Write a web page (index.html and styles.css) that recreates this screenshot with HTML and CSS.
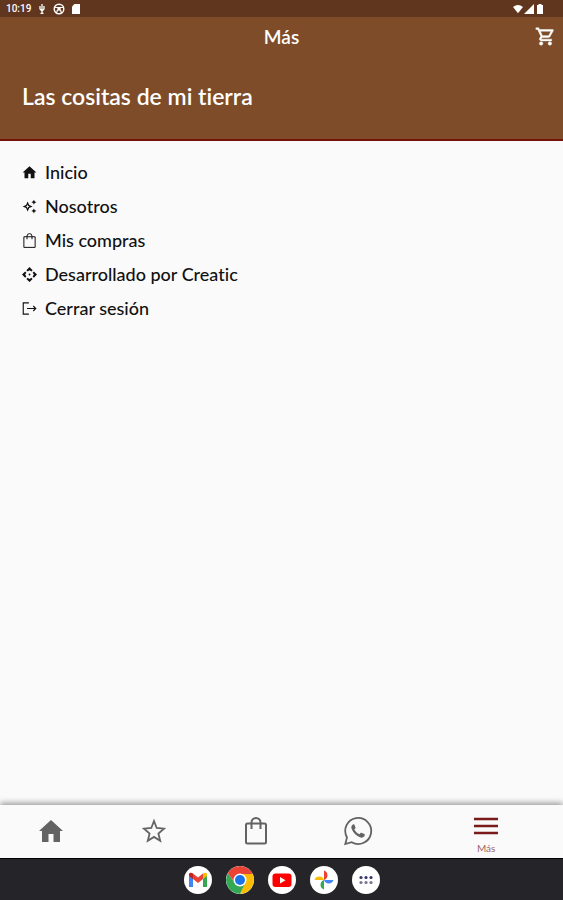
FILE: index.html
```html
<!DOCTYPE html>
<html lang="es">
<head>
    <meta charset="UTF-8">
    <meta name="viewport" content="width=device-width, initial-scale=1.0">
    <title>Más - Las cositas de mi tierra</title>
    <link rel="stylesheet" href="styles.css">
</head>
<body>
    <div class="status-bar">
        <div class="status-group">
            <span class="clock">10:19</span>
            <svg class="status-icon" viewBox="0 0 10 10"><path d="M5 0v6M3 2v3l2 2 2-2V2M5 7v2.500M3.500 9.300h3" fill="none" stroke="currentColor" stroke-width="1.300"/></svg>
            <svg class="status-icon status-ring" viewBox="0 0 12 12"><circle cx="6" cy="6" r="4.800" fill="none" stroke="currentColor" stroke-width="1.400"/><circle cx="6" cy="6" r="1.800" fill="currentColor"/><path d="M2 4.500h8M4.500 7L3.500 10M7.500 7L8.500 10" stroke="currentColor" stroke-width="1.200"/></svg>
            <svg class="status-icon" viewBox="0 0 10 10"><path d="M3.500 0H9v10H1V2.500z" fill="currentColor"/></svg>
        </div>
        <div class="status-group status-right">
            <svg class="status-icon" viewBox="0 0 12 10"><path d="M0 2.500Q6-2 12 2.500L6 10z" fill="currentColor"/></svg>
            <svg class="status-icon" viewBox="0 0 10 10"><path d="M10 0v10H0z" fill="currentColor"/></svg>
            <svg class="status-icon" viewBox="0 0 10 10"><path d="M3.500 0h3v1H8v9H2V1h1.500z" fill="currentColor"/></svg>
        </div>
    </div>

    <header class="header">
        <div class="app-bar">
            <h1>Más</h1>
            <button class="cart-btn" type="button" aria-label="Carrito">
                <svg viewBox="0 0 24 24"><path stroke="currentColor" stroke-width=".5" d="M15.550 13c.75 0 1.410-.41 1.750-1.030l3.580-6.490A.996.996 0 0 0 20.010 4H5.210l-.94-2H1v2h2l3.600 7.590-1.350 2.440C4.520 15.370 5.480 17 7 17h12v-2H7l1.100-2h7.450zM6.160 6h12.150l-2.760 5H8.530L6.160 6zM7 18c-1.100 0-1.990.9-1.990 2S5.900 22 7 22s2-.9 2-2-.9-2-2-2zm10 0c-1.100 0-1.990.9-1.990 2s.89 2 1.990 2 2-.9 2-2-.9-2-2-2z"/></svg>
            </button>
        </div>
        <h2>Las cositas de mi tierra</h2>
    </header>

    <main class="menu">
        <a class="menu-item" href="#inicio">
            <svg viewBox="0 0 24 24"><path d="M10 21v-7h4v7h6v-9h3L12 2 1 12h3v9z"/></svg>
            Inicio
        </a>
        <a class="menu-item" href="#nosotros">
            <svg viewBox="0 0 24 24"><path d="M19 9l1.250-2.750L23 5l-2.750-1.250L19 1l-1.250 2.750L15 5l2.750 1.250zM19 15l-1.250 2.750L15 19l2.750 1.250L19 23l1.250-2.750L23 19l-2.750-1.250zM11.500 9.500L9 4 6.500 9.500 1 12l5.500 2.500L9 20l2.500-5.500L17 12zm-1.510 3.490L9 15.170l-.99-2.180L5.830 12l2.180-.99L9 8.830l.99 2.180 2.180.99z"/></svg>
            Nosotros
        </a>
        <a class="menu-item" href="#compras">
            <svg viewBox="0 0 24 24"><path d="M3 6h18v17H3zM8 10V5a4 4 0 0 1 8 0v5" fill="none" stroke="currentColor" stroke-width="1.600" stroke-linejoin="round"/></svg>
            Mis compras
        </a>
        <a class="menu-item" href="#creatic">
            <svg viewBox="0 0 24 24"><path d="M12 0l5 5-2 2-3-2-3 2-2-2zM24 12l-5 5-2-2 2-3-2-3 2-2zM12 24l-5-5 2-2 3 2 3-2 2 2zM0 12l5-5 2 2-2 3 2 3-2 2z"/><circle cx="12" cy="12" r="1.500"/></svg>
            Desarrollado por Creatic
        </a>
        <a class="menu-item" href="#salir">
            <svg viewBox="0 0 24 24"><path d="M11 3H2v18h9M8 12h14M18 8l4 4-4 4" fill="none" stroke="currentColor" stroke-width="1.800"/></svg>
            Cerrar sesión
        </a>
    </main>

    <nav class="tab-bar">
        <a class="tab" href="#inicio" aria-label="Inicio">
            <svg viewBox="0 0 28 28"><path d="M14 3L2 14h3v11h6.500v-8h5v8H23V14h3z"/></svg>
        </a>
        <a class="tab" href="#favoritos" aria-label="Favoritos">
            <svg viewBox="0 0 28 28"><path d="M14 4l2.700 7 7.300.6-5.600 4.900 1.800 7.300-6.200-3.900-6.200 3.900 1.800-7.300-5.600-4.900 7.300-.6z" fill="none" stroke="currentColor" stroke-width="1.800"/></svg>
        </a>
        <a class="tab" href="#compras" aria-label="Mis compras">
            <svg viewBox="0 0 28 28"><rect x="4" y="6.500" width="20" height="20" rx="1.500" fill="none" stroke="currentColor" stroke-width="2"/><path d="M9.500 12V5.500a4.500 4.500 0 0 1 9 0V12" fill="none" stroke="currentColor" stroke-width="2"/></svg>
        </a>
        <a class="tab" href="#whatsapp" aria-label="WhatsApp">
            <svg viewBox="0 0 28 28"><path d="M1.300 27l1.700-6.500A13 13 0 1 1 7.700 25.200z" fill="none" stroke="currentColor" stroke-width="1.800"/><path d="M9 7.500c-1.500.8-2 2.500-1.400 4.300 1.400 4 4.600 7.300 8.900 8.700 1.800.5 3.600-.3 4.200-2 .2-.8.1-1.200-.3-1.400l-3-1.400c-.5-.2-.8 0-1.700 1.500-2.500-.8-4.500-2.800-5.400-5 1.200-1 1.400-1.300 1.200-1.800L10.400 7.800c-.3-.6-.8-.6-1.400-.3z"/></svg>
        </a>
        <a class="tab tab-active" href="#mas" aria-current="page">
            <svg viewBox="0 0 24 18"><path d="M0 2h24M0 9h24M0 16h24" stroke="currentColor" stroke-width="2.500"/></svg>
            <span>Más</span>
        </a>
    </nav>

    <div class="dock">
        <button class="dock-app" type="button" aria-label="Gmail">
            <svg viewBox="0 0 28 28"><path d="M5 8v13h4v-9z" fill="#4285f4"/><path d="M23 8v13h-4v-9z" fill="#34a853"/><path d="M9 7.500l5 4 5-4V13l-5 4-5-4z" fill="#ea4335"/><path d="M5 10V8.500C5 6.500 7 6 9 7.500V13z" fill="#c5221f"/><path d="M23 10V8.500c0-2-2-2.500-4-1V13z" fill="#fbbc04"/></svg>
        </button>
        <button class="dock-app" type="button" aria-label="Chrome">
            <svg viewBox="0 0 28 28"><path d="M14 14V8h12.600A14 14 0 0 1 14 28l5-11z" fill="#fbbc04"/><path d="M1.900 7A14 14 0 0 0 14 28l5.200-11L14 14 8.800 17z" fill="#34a853"/><path d="M1.900 7l6.900 10L14 8h12.600A14 14 0 0 0 1.900 7z" fill="#ea4335"/><circle cx="14" cy="14" r="6.500" fill="#fff"/><circle cx="14" cy="14" r="5" fill="#1a73e8"/></svg>
        </button>
        <button class="dock-app" type="button" aria-label="YouTube">
            <svg viewBox="0 0 28 28"><rect x="4.500" y="7.500" width="19" height="13.500" rx="3" fill="#f00"/><path d="M12 11l5.500 3.200-5.500 3.200z" fill="#fff"/></svg>
        </button>
        <button class="dock-app" type="button" aria-label="Fotos">
            <svg viewBox="0 0 28 28"><path d="M14 14V4.500a5 5 0 0 1 0 9.500z" fill="#ea4335"/><path d="M14 14h9.500a5 5 0 0 1-9.500 0z" fill="#4285f4"/><path d="M14 14v9.500a5 5 0 0 1 0-9.500z" fill="#34a853"/><path d="M14 14H4.500a5 5 0 0 1 9.500 0z" fill="#fbbc04"/></svg>
        </button>
        <button class="dock-app" type="button" aria-label="Aplicaciones">
            <svg viewBox="0 0 28 28" fill="none"><g fill="#35346b"><circle cx="9" cy="11.500" r="1.600"/><circle cx="14" cy="11.500" r="1.600"/><circle cx="19" cy="11.500" r="1.600"/></g><g fill="#77758c"><circle cx="9" cy="16.500" r="1.600"/><circle cx="14" cy="16.500" r="1.600"/><circle cx="19" cy="16.500" r="1.600"/></g></svg>
        </button>
    </div>
</body>
</html>
```
FILE: styles.css
```css
* {
    box-sizing: border-box;
}

body {
    margin: 0;
    min-height: 100vh;
    display: flex;
    flex-direction: column;
    font-family: Lato, "Open Sans", sans-serif;
    font-variant-ligatures: none;
    background: #fafafa;
    color: #111;
}

svg {
    display: block;
    fill: currentColor;
}

button {
    border: none;
    padding: 0;
    cursor: pointer;
}

h1,
h2 {
    margin: 0;
    font-weight: 600;
}

/* Status bar */
.status-bar {
    display: flex;
    justify-content: space-between;
    align-items: center;
    height: 17px;
    padding: 0 18px 0 6px;
    background: #60361f;
    color: #fff;
}

.status-group {
    display: flex;
    align-items: center;
    gap: 6px;
}

.status-right {
    gap: 1px;
}

.clock {
    font-family: Roboto, sans-serif;
    font-size: 10px;
    font-weight: 500;
}

.status-icon {
    width: 10px;
    height: 10px;
}

.status-ring {
    width: 12px;
    height: 12px;
}

/* Header */
.header {
    background: #7e4c29;
    border-bottom: 2px solid #741208;
    color: #fff;
    padding-bottom: 30px;
}

.app-bar {
    display: grid;
    grid-template-columns: 1fr auto 1fr;
    align-items: center;
    height: 39px;
    padding: 0 7px;
}

.app-bar h1 {
    grid-column: 2;
    font-size: 19px;
}

.cart-btn {
    justify-self: end;
    background: none;
    color: #fff;
}

.cart-btn svg {
    width: 21px;
    height: 21px;
}

.header h2 {
    padding: 28px 22px 0;
    font-size: 23px;
    line-height: 25px;
}

/* Menu */
.menu {
    flex: 1;
    padding: 14px 22px;
}

.menu-item {
    display: flex;
    align-items: center;
    gap: 8px;
    height: 34px;
    font-size: 18px;
    line-height: 20px;
    font-weight: 500;
    color: #111;
    text-decoration: none;
}

.menu-item svg {
    width: 15px;
    height: 15px;
}

/* Bottom tabs */
.tab-bar {
    display: flex;
    height: 53px;
    padding-bottom: 2px;
    background: #fafafa;
    box-shadow: 0 -2px 6px rgba(0, 0, 0, 0.4);
}

.tab {
    flex: 2;
    display: flex;
    flex-direction: column;
    align-items: center;
    justify-content: center;
    color: #636363;
    text-decoration: none;
}

.tab svg {
    width: 28px;
    height: 28px;
    overflow: visible;
}

.tab-active {
    flex: 3;
    justify-content: flex-end;
    gap: 8px;
    padding-bottom: 3px;
    color: #7b1a1a;
    font-size: 10px;
    line-height: 10px;
}

.tab-active svg {
    width: 24px;
    height: 18px;
}

.tab-active span {
    opacity: 0.7;
}

/* Android dock */
.dock {
    display: flex;
    justify-content: center;
    align-items: center;
    gap: 14px;
    height: 42px;
    background: #252429;
    border-top: 1px solid #000;
}

.dock-app {
    width: 28px;
    height: 28px;
    border-radius: 50%;
    background: #fff;
    overflow: hidden;
}

.dock-app svg {
    width: 28px;
    height: 28px;
}
```
